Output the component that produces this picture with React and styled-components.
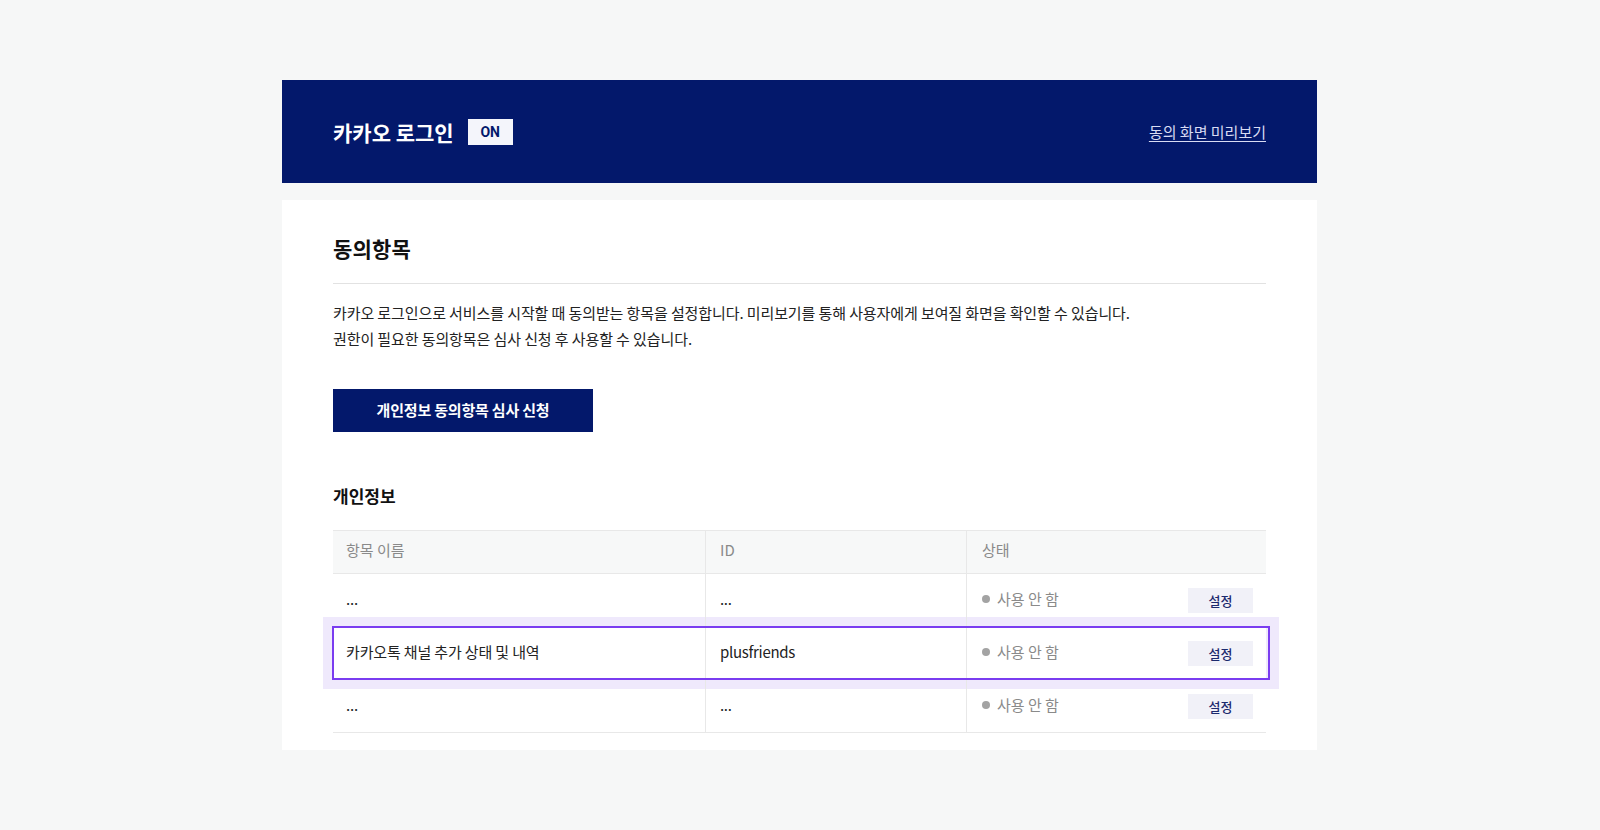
import React from "react";
import styled, { createGlobalStyle } from "styled-components";

const GlobalStyle = createGlobalStyle`
  html, body {
    margin: 0;
    padding: 0;
    background: #f6f7f7;
    font-family: "Noto Sans CJK KR", "Noto Sans", sans-serif;
    color: #222;
  }
  * { box-sizing: border-box; }
`;

const NAVY = "#03186b";

const Page = styled.div`
  width: 1036px;
  margin: 0 auto;
  padding: 80px 1px 80px 0;
`;

const Header = styled.header`
  height: 103px;
  background: ${NAVY};
  padding: 0 51px;
  display: flex;
  align-items: center;
  justify-content: space-between;
`;

const TitleGroup = styled.div`
  display: flex;
  align-items: center;
  gap: 14px;
`;

const AppTitle = styled.h1`
  margin: 0;
  font-size: 21px;
  font-weight: 700;
  letter-spacing: 0;
  color: #fff;
  line-height: 28px;
`;

const Badge = styled.span`
  display: inline-flex;
  align-items: center;
  justify-content: center;
  width: 45px;
  height: 26px;
  background: #f4f5fb;
  color: ${NAVY};
  font-family: "Roboto", "Noto Sans", sans-serif;
  font-size: 14px;
  font-weight: 700;
`;

const PreviewLink = styled.a`
  color: #d9dcf3;
  font-size: 15px;
  letter-spacing: 0;
  text-decoration: underline;
  text-underline-offset: 3px;
  cursor: pointer;
`;

const Panel = styled.section`
  margin-top: 17px;
  background: #fff;
  padding: 0 51px 17px;
  position: relative;
  z-index: 0;
`;

const SectionTitle = styled.h2`
  margin: 0;
  padding: 34px 0 21px;
  font-size: 21px;
  line-height: 28px;
  font-weight: 700;
  letter-spacing: 0.2px;
  color: #111;
  border-bottom: 1px solid #e2e2e2;
`;

const Description = styled.p`
  margin: 16px 0 0;
  font-size: 15px;
  line-height: 26px;
  letter-spacing: -0.1px;
  color: #222;
`;

const PrimaryButton = styled.button`
  margin-top: 37px;
  width: 260px;
  height: 43px;
  border: 0;
  background: ${NAVY};
  color: #fff;
  font-family: inherit;
  font-size: 15px;
  font-weight: 700;
  letter-spacing: -0.2px;
  cursor: pointer;
  display: block;
  padding-bottom: 3px;
`;

const SubTitle = styled.h3`
  margin: 52px 0 0;
  font-size: 17px;
  line-height: 24px;
  font-weight: 700;
  color: #111;
`;

const Table = styled.div`
  margin-top: 22px;
  border-top: 1px solid #e8e8e8;
`;

const Row = styled.div`
  display: grid;
  grid-template-columns: 373px 261px 1fr;
  height: ${(p) => (p.$head ? "43px" : "53px")};
  background: ${(p) => (p.$head ? "#f7f8f8" : p.$highlight ? "#fff" : "transparent")};
  border-bottom: 1px solid #e8e8e8;
  position: ${(p) => (p.$highlight ? "relative" : "static")};

  ${(p) =>
    p.$highlight &&
    `
    &::before {
      content: "";
      position: absolute;
      top: -10px;
      bottom: -10px;
      left: -10px;
      right: -13px;
      background: #efe9fc;
      z-index: -1;
    }
    &::after {
      content: "";
      position: absolute;
      top: -1px;
      bottom: -1px;
      left: -1px;
      right: -4px;
      border: 2px solid #7a3cf0;
      pointer-events: none;
    }
  `}
`;

const Cell = styled.div`
  display: flex;
  align-items: center;
  padding: 0 13px ${(p) => (p.$head ? "5px" : "4px")} ${(p) => p.$pad || 13}px;
  border-right: ${(p) => (p.$last ? "0" : "1px solid #e8e8e8")};
  font-size: 15px;
  color: ${(p) => (p.$head ? "#8a8a8a" : "#222")};
  letter-spacing: ${(p) => (p.$head ? "0" : "-0.15px")};
  justify-content: ${(p) => (p.$split ? "space-between" : "flex-start")};
`;

const IdText = styled.span`
  letter-spacing: -0.3px;
`;

const Status = styled.span`
  display: inline-flex;
  align-items: center;
  gap: 7px;
  font-size: 15px;
  color: #8a8a8a;
  letter-spacing: 0;
`;

const Dot = styled.span`
  width: 8px;
  height: 8px;
  border-radius: 50%;
  background: #a3a3a3;
  margin-top: 1px;
`;

const SmallButton = styled.button`
  width: 65px;
  height: 25px;
  border: 0;
  background: #f1f1f8;
  color: #1c2a6e;
  font-family: inherit;
  font-size: 13px;
  font-weight: 500;
  cursor: pointer;
  margin-top: 4px;
`;

const rows = [
  { name: "...", id: "..." },
  { name: "카카오톡 채널 추가 상태 및 내역", id: "plusfriends", highlight: true },
  { name: "...", id: "..." },
];

export default function App() {
  return (
    <>
      <GlobalStyle />
      <Page>
        <Header>
          <TitleGroup>
            <AppTitle>카카오 로그인</AppTitle>
            <Badge>ON</Badge>
          </TitleGroup>
          <PreviewLink>동의 화면 미리보기</PreviewLink>
        </Header>
        <Panel>
          <SectionTitle>동의항목</SectionTitle>
          <Description>
            카카오 로그인으로 서비스를 시작할 때 동의받는 항목을 설정합니다. 미리보기를 통해 사용자에게 보여질 화면을 확인할 수 있습니다.
            <br />
            권한이 필요한 동의항목은 심사 신청 후 사용할 수 있습니다.
          </Description>
          <PrimaryButton>개인정보 동의항목 심사 신청</PrimaryButton>
          <SubTitle>개인정보</SubTitle>
          <Table>
            <Row $head>
              <Cell $head>항목 이름</Cell>
              <Cell $head $pad={14}>ID</Cell>
              <Cell $head $pad={15} $last>상태</Cell>
            </Row>
            {rows.map((r, i) => (
              <Row key={i} $highlight={r.highlight}>
                <Cell>{r.name}</Cell>
                <Cell $pad={14}>
                  <IdText>{r.id}</IdText>
                </Cell>
                <Cell $pad={15} $last $split>
                  <Status>
                    <Dot />
                    사용 안 함
                  </Status>
                  <SmallButton>설정</SmallButton>
                </Cell>
              </Row>
            ))}
          </Table>
        </Panel>
      </Page>
    </>
  );
}
